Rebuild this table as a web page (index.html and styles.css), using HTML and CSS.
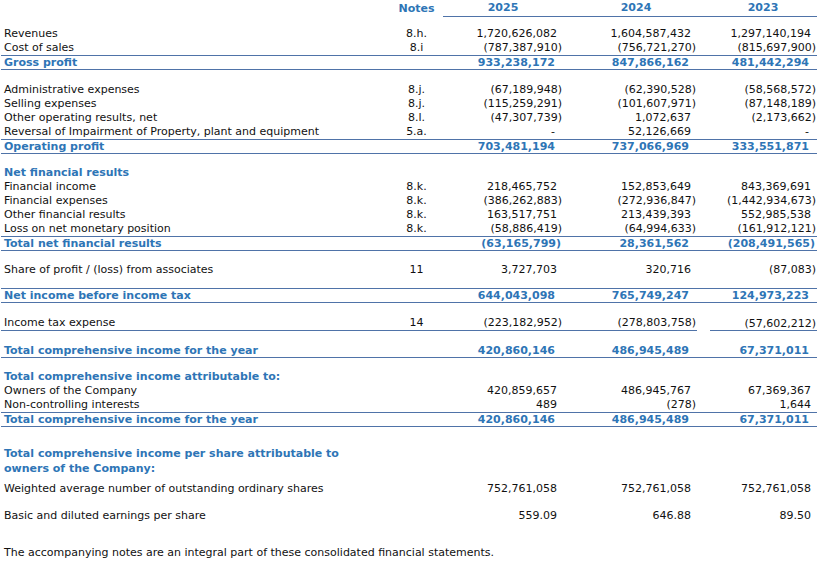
FILE: index.html
```html
<!DOCTYPE html>
<html lang="en">
    <head>
        <meta charset="UTF-8" />
        <meta name="viewport" content="width=device-width, initial-scale=1.0" />
        <title>Consolidated statement of comprehensive income</title>
        <link rel="stylesheet" href="styles.css">
    </head>
    <body>
        <table class="statement">
            <colgroup>
                <col class="c-label">
                <col class="c-note">
                <col class="c-y25">
                <col class="c-y24">
                <col class="c-y23">
            </colgroup>
            <thead>
                <tr class="head">
                    <th></th>
                    <th class="note">Notes</th>
                    <th class="year">2025</th>
                    <th class="year shift">2024</th>
                    <th class="year shift">2023</th>
                </tr>
            </thead>
            <tbody>
                <tr class="sp sp10"><td colspan="5"></td></tr>
                <tr>
                    <td class="label">Revenues</td><td class="note">8.h.</td>
                    <td class="num">1,720,626,082</td><td class="num">1,604,587,432</td><td class="num">1,297,140,194</td>
                </tr>
                <tr>
                    <td class="label">Cost of sales</td><td class="note">8.i</td>
                    <td class="num neg">(787,387,910)</td><td class="num neg">(756,721,270)</td><td class="num neg">(815,697,900)</td>
                </tr>
                <tr class="total">
                    <td class="label">Gross profit</td><td class="note"></td>
                    <td class="num">933,238,172</td><td class="num">847,866,162</td><td class="num">481,442,294</td>
                </tr>

                <tr class="sp sp13"><td colspan="5"></td></tr>
                <tr>
                    <td class="label">Administrative expenses</td><td class="note">8.j.</td>
                    <td class="num neg">(67,189,948)</td><td class="num neg">(62,390,528)</td><td class="num neg">(58,568,572)</td>
                </tr>
                <tr>
                    <td class="label">Selling expenses</td><td class="note">8.j.</td>
                    <td class="num neg">(115,259,291)</td><td class="num neg">(101,607,971)</td><td class="num neg">(87,148,189)</td>
                </tr>
                <tr>
                    <td class="label">Other operating results, net</td><td class="note">8.l.</td>
                    <td class="num neg">(47,307,739)</td><td class="num">1,072,637</td><td class="num neg">(2,173,662)</td>
                </tr>
                <tr>
                    <td class="label">Reversal of Impairment of Property, plant and equipment</td><td class="note">5.a.</td>
                    <td class="num nil">-</td><td class="num">52,126,669</td><td class="num nil">-</td>
                </tr>
                <tr class="total">
                    <td class="label">Operating profit</td><td class="note"></td>
                    <td class="num">703,481,194</td><td class="num">737,066,969</td><td class="num">333,551,871</td>
                </tr>

                <tr class="sp sp12"><td colspan="5"></td></tr>
                <tr class="heading"><td class="label" colspan="5">Net financial results</td></tr>
                <tr>
                    <td class="label">Financial income</td><td class="note">8.k.</td>
                    <td class="num">218,465,752</td><td class="num">152,853,649</td><td class="num">843,369,691</td>
                </tr>
                <tr>
                    <td class="label">Financial expenses</td><td class="note">8.k.</td>
                    <td class="num neg">(386,262,883)</td><td class="num neg">(272,936,847)</td><td class="num neg">(1,442,934,673)</td>
                </tr>
                <tr>
                    <td class="label">Other financial results</td><td class="note">8.k.</td>
                    <td class="num">163,517,751</td><td class="num">213,439,393</td><td class="num">552,985,538</td>
                </tr>
                <tr>
                    <td class="label">Loss on net monetary position</td><td class="note">8.k.</td>
                    <td class="num neg">(58,886,419)</td><td class="num neg">(64,994,633)</td><td class="num neg">(161,912,121)</td>
                </tr>
                <tr class="total">
                    <td class="label">Total net financial results</td><td class="note"></td>
                    <td class="num neg">(63,165,799)</td><td class="num">28,361,562</td><td class="num neg">(208,491,565)</td>
                </tr>

                <tr class="sp sp12"><td colspan="5"></td></tr>
                <tr>
                    <td class="label">Share of profit / (loss) from associates</td><td class="note">11</td>
                    <td class="num">3,727,703</td><td class="num">320,716</td><td class="num neg">(87,083)</td>
                </tr>

                <tr class="sp sp11"><td colspan="5"></td></tr>
                <tr class="total">
                    <td class="label">Net income before income tax</td><td class="note"></td>
                    <td class="num">644,043,098</td><td class="num">765,749,247</td><td class="num">124,973,223</td>
                </tr>

                <tr class="sp sp13"><td colspan="5"></td></tr>
                <tr class="ruled">
                    <td class="label">Income tax expense</td><td class="note">14</td>
                    <td class="num neg">(223,182,952)</td><td class="num neg">(278,803,758)</td><td class="num neg split">(57,602,212)</td>
                </tr>

                <tr class="sp sp13"><td colspan="5"></td></tr>
                <tr class="total open">
                    <td class="label">Total comprehensive income for the year</td><td class="note"></td>
                    <td class="num">420,860,146</td><td class="num">486,945,489</td><td class="num">67,371,011</td>
                </tr>

                <tr class="sp sp12"><td colspan="5"></td></tr>
                <tr class="heading"><td class="label" colspan="5">Total comprehensive income attributable to:</td></tr>
                <tr>
                    <td class="label">Owners of the Company</td><td class="note"></td>
                    <td class="num">420,859,657</td><td class="num">486,945,767</td><td class="num">67,369,367</td>
                </tr>
                <tr>
                    <td class="label">Non-controlling interests</td><td class="note"></td>
                    <td class="num">489</td><td class="num neg">(278)</td><td class="num">1,644</td>
                </tr>
                <tr class="total">
                    <td class="label">Total comprehensive income for the year</td><td class="note"></td>
                    <td class="num">420,860,146</td><td class="num">486,945,489</td><td class="num">67,371,011</td>
                </tr>

                <tr class="sp sp19"><td colspan="5"></td></tr>
                <tr class="heading">
                    <td class="label" colspan="5"><span class="wrap">Total comprehensive income per share attributable to owners of the Company:</span></td>
                </tr>
                <tr class="sp sp6"><td colspan="5"></td></tr>
                <tr>
                    <td class="label">Weighted average number of outstanding ordinary shares</td><td class="note"></td>
                    <td class="num">752,761,058</td><td class="num">752,761,058</td><td class="num">752,761,058</td>
                </tr>
                <tr class="sp sp13"><td colspan="5"></td></tr>
                <tr>
                    <td class="label">Basic and diluted earnings per share</td><td class="note"></td>
                    <td class="num">559.09</td><td class="num">646.88</td><td class="num">89.50</td>
                </tr>
            </tbody>
        </table>
        <p class="foot">The accompanying notes are an integral part of these consolidated financial statements.</p>
    </body>
</html>
```

FILE: styles.css
```css
* {
    margin: 0;
    padding: 0;
    box-sizing: border-box;
}

body {
    font-family: "DejaVu Sans", Verdana, sans-serif;
    font-size: 11px;
    color: #111;
    background: #fff;
    padding: 0 2px 0 1px;
}

.statement {
    border-collapse: separate;
    border-spacing: 0;
    table-layout: fixed;
    width: 816px;

    .c-label { width: 389px; }
    .c-note { width: 53px; }
    .c-y25 { width: 120px; }
    .c-y24 { width: 134px; }
    .c-y23 { width: 120px; }

    td {
        line-height: 14px;
        white-space: nowrap;
    }
}

.head th {
    font-weight: bold;
    color: #2e75b6;
    line-height: 16px;
    text-align: center;

    &.year {
        border-bottom: 1px solid #4f73a8;
    }
    &.shift {
        padding-left: 12px;
    }
}

.sp td {
    line-height: 0;
    font-size: 0;
}
.sp6 td { height: 6px; }
.sp10 td { height: 10px; }
.sp11 td { height: 11px; }
.sp12 td { height: 12px; }
.sp13 td { height: 13px; }
.sp19 td { height: 19px; }

.label {
    padding-left: 3px;
}

.note {
    text-align: center;
}

.num {
    text-align: right;
    padding-right: 6px;

    &.neg { padding-right: 1px; }
    &.nil { padding-right: 8px; }
}

.heading td {
    color: #2e75b6;
    font-weight: bold;

    .wrap {
        display: block;
        width: 340px;
        line-height: 15px;
        white-space: normal;
    }
}

.total td {
    color: #2e75b6;
    font-weight: bold;
    line-height: 13px;
    border-top: 1px solid #4f73a8;
    border-bottom: 1px solid #4f73a8;

    &.num { padding-right: 8px; }
    &.num.neg { padding-right: 2px; }
}

.total.open td {
    border-top: none;
}

.ruled td {
    border-bottom: 1px solid #4f73a8;

    &.split {
        border-bottom: none;
        background: linear-gradient(#4f73a8, #4f73a8) no-repeat right bottom / calc(100% - 13px) 1px;
    }
}

.foot {
    margin-top: 23px;
    padding-left: 3px;
    line-height: 14px;
}
```
